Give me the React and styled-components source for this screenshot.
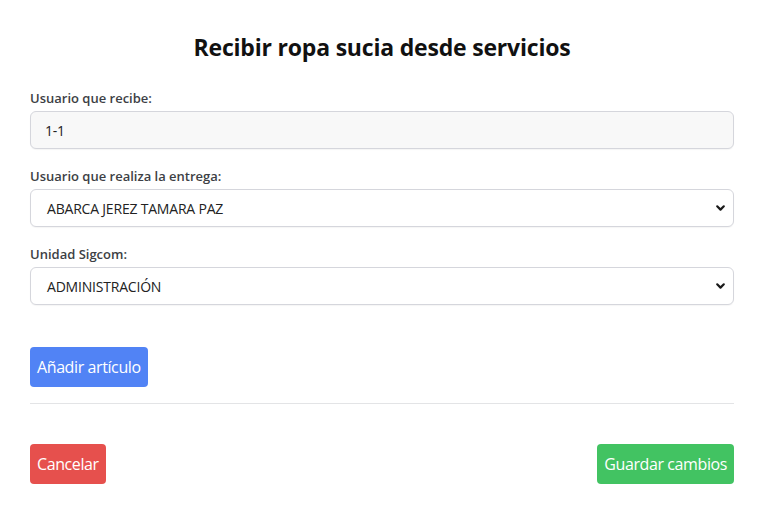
import React from "react";
import styled, { createGlobalStyle } from "styled-components";

const Global = createGlobalStyle`
  html, body { margin: 0; padding: 0; background: #ffffff; }
  body { font-family: "Open Sans", "Noto Sans", Arial, sans-serif; }
  * { box-sizing: border-box; }
`;

const Modal = styled.div`
  width: 757px;
  height: 513px;
  padding: 29px 23px 0 30px;
  background: #fff;
`;

const Title = styled.h2`
  margin: 0 0 23px;
  text-align: center;
  font-size: 23px;
  line-height: 36px;
  font-weight: 700;
  color: #111;
  letter-spacing: -0.2px;
`;

const Field = styled.div`
  display: flex;
  flex-direction: column;
  padding-bottom: 17px;
`;

const Label = styled.label`
  font-size: 13px;
  line-height: 20px;
  margin-bottom: 3px;
  font-weight: 600;
  color: #3d3f45;
`;

const Control = styled.div`
  position: relative;
  height: 38px;
  border: 1px solid #d5d6dc;
  border-radius: 6px;
  background: ${(p) => (p.$readOnly ? "#f8f8f8" : "#fff")};
  box-shadow: 0 1px 1px rgba(0, 0, 0, 0.04);
  display: flex;
  align-items: center;
  padding-left: ${(p) => (p.$select ? "16px" : "14px")};
  font-size: 14px;
  color: #222;
  letter-spacing: -0.2px;
`;

const Chevron = styled.svg`
  position: absolute;
  right: 7px;
  top: 50%;
  transform: translateY(-50%);
`;

const Button = styled.button`
  border: none;
  border-radius: 4px;
  height: 40px;
  padding: 0 7px;
  font-family: inherit;
  font-size: 16px;
  color: #fff;
  letter-spacing: -0.4px;
  background: ${(p) => p.$bg};
  cursor: pointer;
`;

const AddRow = styled.div`
  padding-top: 25px;
  display: flex;
`;

const Divider = styled.hr`
  margin: 16px 0 0;
  border: none;
  border-top: 1px solid #e3e4e6;
`;

const Footer = styled.div`
  margin-top: 40px;
  display: flex;
  justify-content: space-between;
`;

function Select({ value }) {
  return (
    <Control $select>
      {value}
      <Chevron width="11" height="8" viewBox="0 0 11 8">
        <path d="M2.2 2.3 L5.5 5.6 L8.8 2.3" fill="none" stroke="#1a1a1a" strokeWidth="2.2" strokeLinecap="round" strokeLinejoin="round" />
      </Chevron>
    </Control>
  );
}

export default function App() {
  return (
    <>
      <Global />
      <Modal>
        <Title>Recibir ropa sucia desde servicios</Title>
        <Field>
          <Label>Usuario que recibe:</Label>
          <Control $readOnly>1-1</Control>
        </Field>
        <Field>
          <Label>Usuario que realiza la entrega:</Label>
          <Select value="ABARCA JEREZ TAMARA PAZ" />
        </Field>
        <Field>
          <Label>Unidad Sigcom:</Label>
          <Select value="ADMINISTRACIÓN" />
        </Field>
        <AddRow>
          <Button $bg="#5183f5">Añadir artículo</Button>
        </AddRow>
        <Divider />
        <Footer>
          <Button $bg="#e6504d">Cancelar</Button>
          <Button $bg="#42c362">Guardar cambios</Button>
        </Footer>
      </Modal>
    </>
  );
}
